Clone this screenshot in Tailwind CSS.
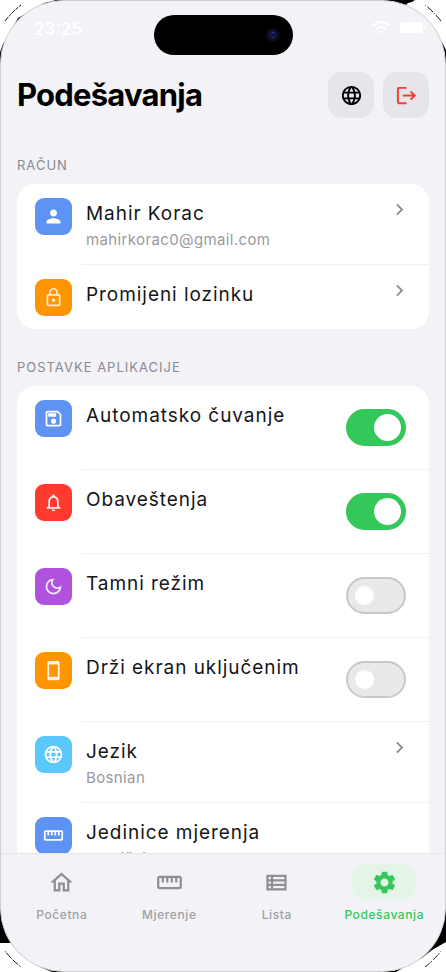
<!DOCTYPE html>
<html lang="bs">
<head>
<meta charset="utf-8">
<meta name="viewport" content="width=device-width, initial-scale=1">
<title>Podešavanja</title>
<script src="https://cdn.jsdelivr.net/npm/@tailwindcss/browser@4"></script>
</head>
<body class="relative h-screen overflow-hidden bg-white font-['Inter','Roboto',sans-serif] text-[#151517]">

<svg width="0" height="0" class="absolute" aria-hidden="true">
  <symbol id="globe" viewBox="0 0 24 24"><path d="M11.99 2C6.47 2 2 6.48 2 12s4.47 10 9.99 10C17.52 22 22 17.52 22 12S17.52 2 11.99 2zm6.93 6h-2.95c-.32-1.25-.78-2.45-1.38-3.56 1.84.63 3.37 1.91 4.33 3.56zM12 4.04c.83 1.2 1.48 2.53 1.91 3.96h-3.82c.43-1.43 1.08-2.76 1.91-3.96zM4.26 14C4.1 13.36 4 12.69 4 12s.1-1.36.26-2h3.38c-.08.66-.14 1.32-.14 2 0 .68.06 1.34.14 2H4.26zm.82 2h2.95c.32 1.25.78 2.45 1.38 3.56-1.84-.63-3.37-1.9-4.33-3.56zm2.95-8H5.08c.96-1.66 2.49-2.93 4.33-3.56C8.81 5.55 8.35 6.75 8.03 8zM12 19.96c-.83-1.2-1.48-2.53-1.91-3.96h3.82c-.43 1.43-1.08 2.76-1.91 3.96zM14.34 14H9.66c-.09-.66-.16-1.32-.16-2 0-.68.07-1.35.16-2h4.68c.09.65.16 1.32.16 2 0 .68-.07 1.34-.16 2zm.25 5.56c.6-1.11 1.06-2.31 1.38-3.56h2.95c-.96 1.65-2.49 2.93-4.33 3.56zM16.36 14c.08-.66.14-1.32.14-2 0-.68-.06-1.34-.14-2h3.38c.16.64.26 1.31.26 2s-.1 1.36-.26 2h-3.38z"/></symbol>
  <symbol id="ruler" viewBox="0 0 24 24"><path d="M21 6H3c-1.1 0-2 .9-2 2v8c0 1.1.9 2 2 2h18c1.1 0 2-.9 2-2V8c0-1.1-.9-2-2-2zm0 10H3V8h2v4h2V8h2v4h2V8h2v4h2V8h2v4h2V8h2v8z"/></symbol>
  <symbol id="chevron" viewBox="0 0 24 24"><path d="M10 6L8.59 7.41 13.17 12l-4.58 4.59L10 18l6-6z"/></symbol>
</svg>

<!-- Bezel remnants behind the rounded screen corners -->
<svg class="absolute top-0 left-0 size-16" viewBox="0 0 64 64" aria-hidden="true"><path d="M0 64V52L3 44L18 18L44 3L56 0H64V64z" fill="#111"/><path d="M5 21Q12 12 21 5" stroke="#111" stroke-width="1" stroke-dasharray="5 1 3 1" fill="none"/></svg>
<svg class="absolute top-0 right-0 size-16" viewBox="0 0 64 64" aria-hidden="true"><path d="M0 0H33L30 2L26 3L23 6L45 20L61 44L64 50V64H0z" fill="#000"/><path d="M43 5Q52 12 59 21" stroke="#111" stroke-width="1" stroke-dasharray="1 2 8 1" fill="none"/></svg>
<svg class="absolute bottom-0 left-0 size-16" viewBox="0 0 64 64" aria-hidden="true"><path d="M0 0V35H11L20 46L40 59L52 64H64V0z" fill="#000"/><path d="M5 43Q12 52 21 59" stroke="#111" stroke-width="1" stroke-dasharray="1 1 7 1" fill="none"/></svg>
<svg class="absolute right-0 bottom-0 size-16" viewBox="0 0 64 64" aria-hidden="true"><path d="M64 0V34L50 42L40 50L26 57L14 64H0V0z" fill="#000"/><path d="M43 59Q52 52 59 43" stroke="#111" stroke-width="1" stroke-dasharray="6 1 2 2" fill="none"/></svg>

<div class="relative flex h-full flex-col overflow-hidden rounded-[64px] border border-[#cfcfd2] bg-[#f2f2f7]">

  <div class="grid h-[71px] shrink-0 grid-cols-[1fr_139px_1fr] items-start px-[18px] pt-[14px]">
    <div class="pt-1 pl-[15px] text-[17px] leading-[20px] font-semibold text-white">23:25</div>
    <div class="flex h-10 items-center justify-end rounded-full bg-black pr-[13px]">
      <svg width="14" height="14" viewBox="0 0 14 14" aria-hidden="true"><circle cx="7" cy="7" r="7" fill="#0b0a18"/><circle cx="7" cy="7" r="4.500" fill="#14143a"/><circle cx="7" cy="5" r="1.500" fill="#2b2b78"/><circle cx="7" cy="9" r="1.500" fill="#22225c"/><circle cx="7" cy="7" r="1" fill="#05050f"/></svg>
    </div>
    <div class="flex items-center justify-end gap-2 pt-[5px]">
      <svg width="20" height="15" viewBox="0 0 20 15" fill="none" stroke="#fff" stroke-width="2.600" aria-hidden="true"><path d="M2 5.500Q10-1.500 18 5.500M5.500 9Q10 5 14.500 9"/><path d="M10 14L7.500 11.500Q10 9.500 12.500 11.500z" fill="#fff" stroke="none"/></svg>
      <svg width="28" height="13" viewBox="0 0 28 13" aria-hidden="true"><rect x="1" y="1" width="23" height="11" rx="3.500" fill="#fff"/><path d="M25.500 4.500v4q1.500-.5 1.500-2t-1.500-2z" fill="#fff"/></svg>
    </div>
  </div>

  <main class="min-h-0 flex-1 overflow-hidden px-4">
    <header class="flex items-center justify-between">
      <h1 class="text-[31px] leading-[40px] font-bold tracking-tight text-black">Podešavanja</h1>
      <div class="flex gap-[9px]">
        <button type="button" aria-label="Jezik" class="flex size-[46px] items-center justify-center rounded-[14px] bg-[#e5e5ea]"><svg class="size-[23px] fill-black"><use href="#globe"/></svg></button>
        <button type="button" aria-label="Odjava" class="flex size-[46px] items-center justify-center rounded-[14px] bg-[#e5e5ea]"><svg class="size-[23px] fill-[#ff3b30]" viewBox="0 0 24 24"><path d="M17 7l-1.410 1.410L18.170 11H8v2h10.170l-2.580 2.580L17 17l5-5zM4 5h8V3H4c-1.100 0-2 .9-2 2v14c0 1.100.9 2 2 2h8v-2H4V5z"/></svg></button>
      </div>
    </header>

    <section class="pt-[37px]">
      <h2 class="mb-[9px] text-[13px] leading-[20px] tracking-[1px] text-[#8a8a8f]">RAČUN</h2>
      <ul class="overflow-hidden rounded-[18px] bg-white">
        <li>
          <button type="button" class="flex w-full items-start pl-[18px] text-left">
            <span class="mt-[14px] mr-[9px] flex size-[37px] shrink-0 items-center justify-center rounded-[9px] bg-[#5e92f3]"><svg class="size-[21px] fill-white" viewBox="0 0 24 24"><path d="M12 12c2.210 0 4-1.790 4-4s-1.790-4-4-4-4 1.790-4 4 1.790 4 4 4zm0 2c-2.670 0-8 1.340-8 4v2h16v-2c0-2.660-5.330-4-8-4z"/></svg></span>
            <span class="flex flex-1 items-start justify-between border-b border-[#f0f0f2] py-[14px] pr-[18px] pl-[5px]">
              <span class="flex flex-col"><span class="text-[19px] leading-[32px] tracking-wider">Mahir Korac</span><span class="text-[15px] leading-[20px] tracking-wide text-[#9a9a9e]">mahirkorac0@gmail.com</span></span>
              <svg class="size-[23px] fill-[#8e8e93]"><use href="#chevron"/></svg>
            </span>
          </button>
        </li>
        <li>
          <button type="button" class="flex w-full items-start pl-[18px] text-left">
            <span class="mt-[14px] mr-[9px] mb-[13px] flex size-[37px] shrink-0 items-center justify-center rounded-[9px] bg-[#ff9500]"><svg class="size-[21px] fill-[#ffeccf]" viewBox="0 0 24 24"><path d="M12 17c1.100 0 2-.9 2-2s-.9-2-2-2-2 .9-2 2 .9 2 2 2zm6-9h-1V6c0-2.760-2.240-5-5-5S7 3.240 7 6v2H6c-1.100 0-2 .9-2 2v10c0 1.100.9 2 2 2h12c1.100 0 2-.9 2-2V10c0-1.100-.9-2-2-2zM8.900 6c0-1.710 1.390-3.100 3.100-3.100s3.100 1.390 3.100 3.100v2H8.900V6zM18 20H6V10h12v10z"/></svg></span>
            <span class="flex flex-1 items-start justify-between pt-[14px] pr-[18px] pl-[5px]">
              <span class="text-[19px] leading-[32px] tracking-wider">Promijeni lozinku</span>
              <svg class="size-[23px] fill-[#8e8e93]"><use href="#chevron"/></svg>
            </span>
          </button>
        </li>
      </ul>
    </section>

    <section class="pt-7">
      <h2 class="mb-[9px] text-[13px] leading-[20px] tracking-[1px] text-[#8a8a8f]">POSTAVKE APLIKACIJE</h2>
      <ul class="overflow-hidden rounded-[18px] bg-white">
        <li class="flex items-start pl-[18px]">
          <span class="mt-[14px] mr-[9px] flex size-[37px] shrink-0 items-center justify-center rounded-[9px] bg-[#5e92f3]"><svg class="size-[21px] fill-white" viewBox="0 0 24 24"><path d="M17 3H5c-1.110 0-2 .9-2 2v14c0 1.100.89 2 2 2h14c1.100 0 2-.9 2-2V7l-4-4zm2 16H5V5h11.170L19 7.830V19zm-7-7c-1.660 0-3 1.340-3 3s1.340 3 3 3 3-1.340 3-3-1.340-3-3-3zM6 6h9v4H6z"/></svg></span>
          <span class="flex flex-1 items-start justify-between border-b border-[#f0f0f2] py-[14px] pr-[23px] pl-[5px]">
            <label for="autosave" class="text-[19px] leading-[32px] tracking-wider">Automatsko čuvanje</label>
            <span class="flex h-[55px] items-center"><input id="autosave" type="checkbox" role="switch" checked class="relative h-[37px] w-[60px] appearance-none rounded-full border-2 border-[#c7c7cc] bg-[#e9e9ea] before:absolute before:top-[7px] before:left-[7px] before:size-[19px] before:rounded-full before:bg-white checked:border-[#34c759] checked:bg-[#34c759] checked:before:top-[3px] checked:before:left-[26px] checked:before:size-[27px]"></span>
          </span>
        </li>
        <li class="flex items-start pl-[18px]">
          <span class="mt-[14px] mr-[9px] flex size-[37px] shrink-0 items-center justify-center rounded-[9px] bg-[#ff3b30]"><svg class="size-[21px] fill-[#ffe5e3]" viewBox="0 0 24 24"><path d="M12 22c1.100 0 2-.9 2-2h-4c0 1.100.9 2 2 2zm6-6v-5c0-3.070-1.630-5.640-4.500-6.320V4c0-.83-.67-1.500-1.500-1.500s-1.500.67-1.500 1.500v.68C7.640 5.360 6 7.920 6 11v5l-2 2v1h16v-1l-2-2zm-2 1H8v-6c0-2.480 1.510-4.500 4-4.500s4 2.020 4 4.500v6z"/></svg></span>
          <span class="flex flex-1 items-start justify-between border-b border-[#f0f0f2] py-[14px] pr-[23px] pl-[5px]">
            <label for="notify" class="text-[19px] leading-[32px] tracking-wider">Obaveštenja</label>
            <span class="flex h-[55px] items-center"><input id="notify" type="checkbox" role="switch" checked class="relative h-[37px] w-[60px] appearance-none rounded-full border-2 border-[#c7c7cc] bg-[#e9e9ea] before:absolute before:top-[7px] before:left-[7px] before:size-[19px] before:rounded-full before:bg-white checked:border-[#34c759] checked:bg-[#34c759] checked:before:top-[3px] checked:before:left-[26px] checked:before:size-[27px]"></span>
          </span>
        </li>
        <li class="flex items-start pl-[18px]">
          <span class="mt-[14px] mr-[9px] flex size-[37px] shrink-0 items-center justify-center rounded-[9px] bg-[#af52de]"><svg class="size-[21px] fill-[#f6eafb]" viewBox="0 0 24 24"><path d="M9.370 5.510C9.190 6.150 9.100 6.820 9.100 7.500c0 4.080 3.320 7.400 7.400 7.400.68 0 1.350-.09 1.990-.27C17.450 17.190 14.930 19 12 19c-3.860 0-7-3.140-7-7 0-2.930 1.810-5.450 4.370-6.490zM12 3c-4.970 0-9 4.030-9 9s4.030 9 9 9 9-4.030 9-9c0-.46-.04-.92-.1-1.360-.98 1.370-2.580 2.260-4.400 2.260-2.980 0-5.400-2.420-5.400-5.400 0-1.810.89-3.420 2.260-4.400C12.920 3.040 12.460 3 12 3z"/></svg></span>
          <span class="flex flex-1 items-start justify-between border-b border-[#f0f0f2] py-[14px] pr-[23px] pl-[5px]">
            <label for="dark" class="text-[19px] leading-[32px] tracking-wider">Tamni režim</label>
            <span class="flex h-[55px] items-center"><input id="dark" type="checkbox" role="switch" class="relative h-[37px] w-[60px] appearance-none rounded-full border-2 border-[#c7c7cc] bg-[#e9e9ea] before:absolute before:top-[7px] before:left-[7px] before:size-[19px] before:rounded-full before:bg-white checked:border-[#34c759] checked:bg-[#34c759] checked:before:top-[3px] checked:before:left-[26px] checked:before:size-[27px]"></span>
          </span>
        </li>
        <li class="flex items-start pl-[18px]">
          <span class="mt-[14px] mr-[9px] flex size-[37px] shrink-0 items-center justify-center rounded-[9px] bg-[#ff9500]"><svg class="size-[21px] fill-[#fff4e3]" viewBox="0 0 24 24"><path d="M17 1.010L7 1c-1.100 0-1.990.9-1.990 2v18c0 1.100.89 2 1.990 2h10c1.100 0 2-.9 2-2V3c0-1.100-.9-1.990-2-1.990zM17 19H7V5h10v14z"/></svg></span>
          <span class="flex flex-1 items-start justify-between border-b border-[#f0f0f2] py-[14px] pr-[23px] pl-[5px]">
            <label for="awake" class="text-[19px] leading-[32px] tracking-wider">Drži ekran uključenim</label>
            <span class="flex h-[55px] items-center"><input id="awake" type="checkbox" role="switch" class="relative h-[37px] w-[60px] appearance-none rounded-full border-2 border-[#c7c7cc] bg-[#e9e9ea] before:absolute before:top-[7px] before:left-[7px] before:size-[19px] before:rounded-full before:bg-white checked:border-[#34c759] checked:bg-[#34c759] checked:before:top-[3px] checked:before:left-[26px] checked:before:size-[27px]"></span>
          </span>
        </li>
        <li>
          <button type="button" class="flex w-full items-start pl-[18px] text-left">
            <span class="mt-[14px] mr-[9px] flex size-[37px] shrink-0 items-center justify-center rounded-[9px] bg-[#5ac8fa]"><svg class="size-[21px] fill-white"><use href="#globe"/></svg></span>
            <span class="flex flex-1 items-start justify-between border-b border-[#f0f0f2] py-[14px] pr-[18px] pl-[5px]">
              <span class="flex flex-col"><span class="text-[19px] leading-[32px] tracking-wider">Jezik</span><span class="text-[15px] leading-[20px] tracking-wide text-[#9a9a9e]">Bosnian</span></span>
              <svg class="size-[23px] fill-[#8e8e93]"><use href="#chevron"/></svg>
            </span>
          </button>
        </li>
        <li>
          <button type="button" class="flex w-full items-start pl-[18px] text-left">
            <span class="mt-[14px] mr-[9px] flex size-[37px] shrink-0 items-center justify-center rounded-[9px] bg-[#5e92f3]"><svg class="size-[21px] fill-white"><use href="#ruler"/></svg></span>
            <span class="flex flex-1 items-start py-[14px] pr-[18px] pl-[5px]">
              <span class="flex flex-col"><span class="text-[19px] leading-[32px] tracking-wider">Jedinice mjerenja</span><span class="text-[15px] leading-[20px] tracking-wide text-[#9a9a9e]">Metrički</span></span>
            </span>
          </button>
        </li>
      </ul>
    </section>
  </main>

  <nav class="grid h-[118px] shrink-0 grid-cols-4 items-start border-t border-[#e6e6ea] px-[7px] pt-[10px] text-[12px] leading-[18px] font-medium tracking-wider text-[#a0a0a5]">
    <a href="#" class="flex flex-col items-center gap-[6px]"><span class="flex h-9 w-16 items-center justify-center rounded-[14px]"><svg class="size-[27px] fill-[#8e8e93]" viewBox="0 0 24 24"><path d="M12 5.690l5 4.500V18h-2v-6H9v6H7v-7.810l5-4.500M12 3L2 12h3v8h6v-6h2v6h6v-8h3L12 3z"/></svg></span>Početna</a>
    <a href="#" class="flex flex-col items-center gap-[6px]"><span class="flex h-9 w-16 items-center justify-center rounded-[14px]"><svg class="size-[27px] fill-[#8e8e93]"><use href="#ruler"/></svg></span>Mjerenje</a>
    <a href="#" class="flex flex-col items-center gap-[6px]"><span class="flex h-9 w-16 items-center justify-center rounded-[14px]"><svg class="size-[27px] fill-[#8e8e93]" viewBox="0 0 24 24"><path d="M3 5v14h18V5H3zm4 2v2H5V7h2zm-2 6v-2h2v2H5zm0 2h2v2H5v-2zm14 2H9v-2h10v2zm0-4H9v-2h10v2zm0-4H9V7h10v2z"/></svg></span>Lista</a>
    <a href="#" aria-current="page" class="flex flex-col items-center gap-[6px] text-[#34c759]"><span class="flex h-9 w-16 items-center justify-center rounded-[14px] bg-[#e4f5e8]"><svg class="size-[27px] fill-[#34c759]" viewBox="0 0 24 24"><path d="M19.140 12.940c.04-.3.06-.61.06-.94 0-.32-.02-.64-.07-.94l2.030-1.580c.18-.14.23-.41.12-.61l-1.920-3.320c-.12-.22-.37-.29-.59-.22l-2.390.96c-.5-.38-1.030-.7-1.620-.94l-.36-2.540c-.04-.24-.24-.41-.48-.41h-3.840c-.24 0-.43.17-.47.41l-.36 2.540c-.59.24-1.130.57-1.620.94l-2.390-.96c-.22-.08-.47 0-.59.22L2.740 8.870c-.12.21-.08.47.12.61l2.030 1.580c-.05.3-.09.63-.09.94s.02.64.07.94l-2.030 1.580c-.18.14-.23.41-.12.61l1.920 3.320c.12.22.37.29.59.22l2.390-.96c.5.38 1.030.7 1.620.94l.36 2.540c.05.24.24.41.48.41h3.840c.24 0 .44-.17.47-.41l.36-2.540c.59-.24 1.130-.56 1.620-.94l2.390.96c.22.08.47 0 .59-.22l1.920-3.320c.12-.22.07-.47-.12-.61l-2.010-1.580zM12 15.600c-1.980 0-3.600-1.620-3.600-3.600s1.620-3.600 3.600-3.600 3.600 1.620 3.600 3.600-1.620 3.600-3.600 3.600z"/></svg></span>Podešavanja</a>
  </nav>
</div>
</body>
</html>
